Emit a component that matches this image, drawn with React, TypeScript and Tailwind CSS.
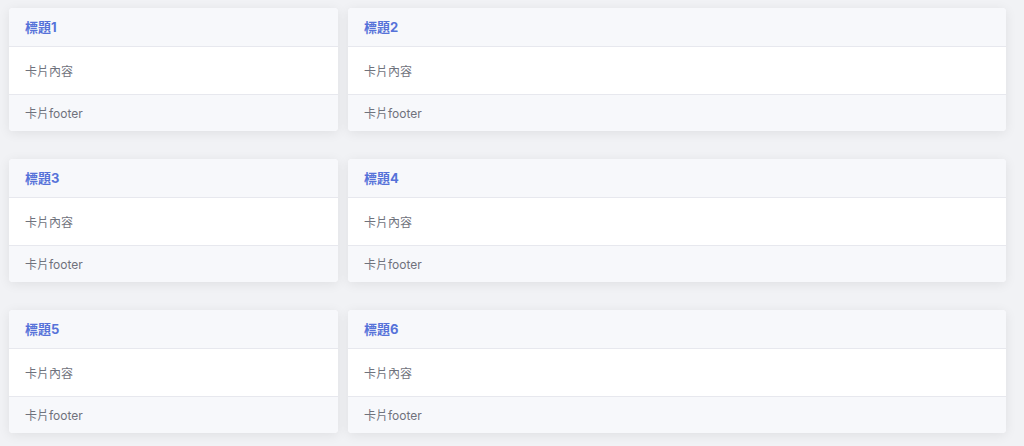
import React from 'react';

const cards = ['標題1', '標題2', '標題3', '標題4', '標題5', '標題6'];

const Card: React.FC<{ title: string }> = ({ title }) => (
    <div className="bg-white rounded-[4px] overflow-hidden shadow-[0_2px_12px_rgba(0,0,0,0.08)]">
        <div className="h-[39px] flex items-center px-4 pt-px bg-[#f7f8fb] border-b border-[#e7e8ee] text-[13px] font-bold text-[#5672d9]">
            {title}
        </div>
        <div className="h-[48px] flex items-center px-4 pt-[2px] bg-white border-b border-[#e7e8ee] text-[12px] text-[#6f727c]">
            卡片內容
        </div>
        <div className="h-[36px] flex items-center px-4 pt-[2px] bg-[#f7f8fb] text-[12px] text-[#6f727c]">
            卡片footer
        </div>
    </div>
);

export default function App() {
    return (
        <div
            className="w-[1024px] h-[446px] overflow-hidden bg-[#f1f2f5] pt-2 pl-[9px]"
            style={{ fontFamily: '"Helvetica Neue", Inter, "Noto Sans CJK TC", sans-serif' }}
        >
            <div className="grid grid-cols-[329px_658px] gap-x-[10px] gap-y-7">
                {cards.map((c) => (
                    <Card key={c} title={c} />
                ))}
            </div>
        </div>
    );
}
